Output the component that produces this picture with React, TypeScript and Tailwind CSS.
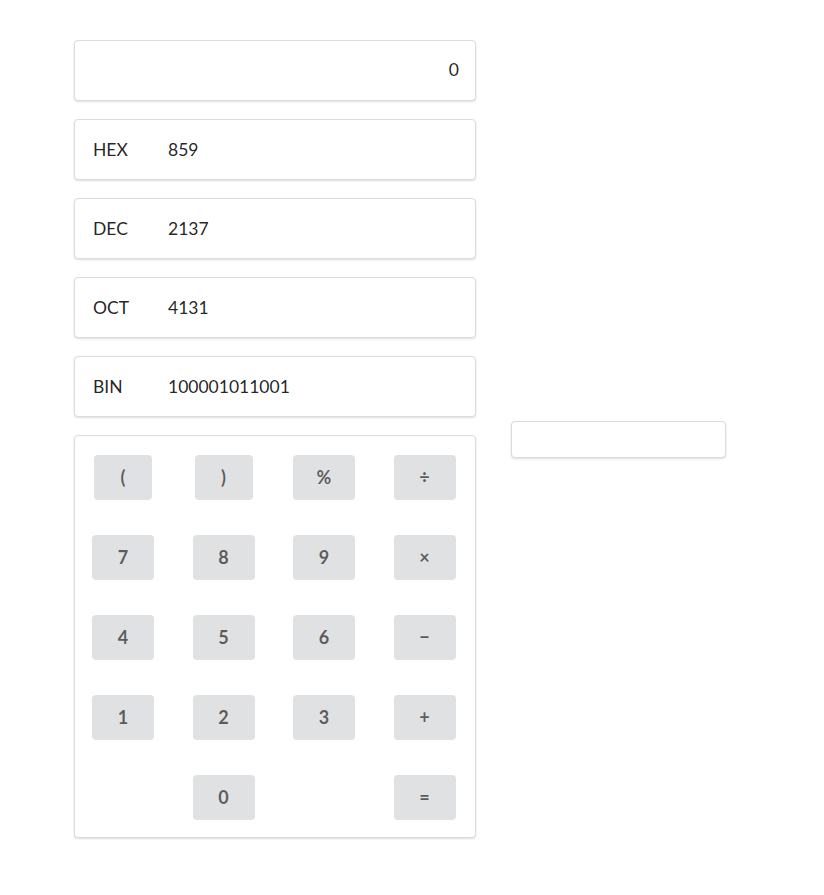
const bases = [
  { label: 'HEX', value: '859' },
  { label: 'DEC', value: '2137' },
  { label: 'OCT', value: '4131' },
  { label: 'BIN', value: '100001011001' },
];

const keys: { k: string; narrow?: boolean }[][] = [
  [{ k: '(', narrow: true }, { k: ')', narrow: true }, { k: '%' }, { k: '÷' }],
  [{ k: '7' }, { k: '8' }, { k: '9' }, { k: '×' }],
  [{ k: '4' }, { k: '5' }, { k: '6' }, { k: '−' }],
  [{ k: '1' }, { k: '2' }, { k: '3' }, { k: '+' }],
  [{ k: '' }, { k: '0' }, { k: '' }, { k: '=' }],
];

const segment =
  'bg-white border border-[#dcdcdd] rounded-[4px] shadow-[0_1px_2px_0_rgba(34,36,38,0.15)]';

export default function App() {
  return (
    <div className="min-h-screen bg-white font-['Lato',sans-serif] text-[rgba(0,0,0,0.87)]">
      <div className="flex items-center gap-[35px] pl-[74px] pt-[40px]">
        {/* left column */}
        <div className="flex w-[402px] flex-col gap-[18px]">
          <div className={`${segment} flex h-[61px] items-center justify-end px-[16px] text-[17.5px]`}>
            0
          </div>

          {bases.map((b) => (
            <div key={b.label} className={`${segment} flex h-[61px] items-center px-[18px] pt-[1px] text-[17.5px]`}>
              <span className="w-[75px]">{b.label}</span>
              <span>{b.value}</span>
            </div>
          ))}

          {/* keypad */}
          <div className={`${segment} flex flex-col gap-[35px] pb-[17px] pl-[17px] pt-[19px]`}>
            {keys.map((row, i) => (
              <div key={i} className="grid grid-cols-[62px_62px_62px_62px] gap-x-[38.5px]">
                {row.map((key, j) => (
                  <div key={j} className="flex justify-center">
                    {key.k ? (
                      <button
                        className={`${key.narrow ? 'w-[58px]' : 'w-[62px]'} h-[45px] rounded-[4px] bg-[#e0e1e2] text-[18px] font-bold text-[rgba(0,0,0,0.6)]`}
                      >
                        {key.k}
                      </button>
                    ) : (
                      <div className="h-[45px] w-[62px]" />
                    )}
                  </div>
                ))}
              </div>
            ))}
          </div>
        </div>

        {/* right column */}
        <div className={`${segment} h-[37px] w-[215px]`} />
      </div>
    </div>
  );
}
